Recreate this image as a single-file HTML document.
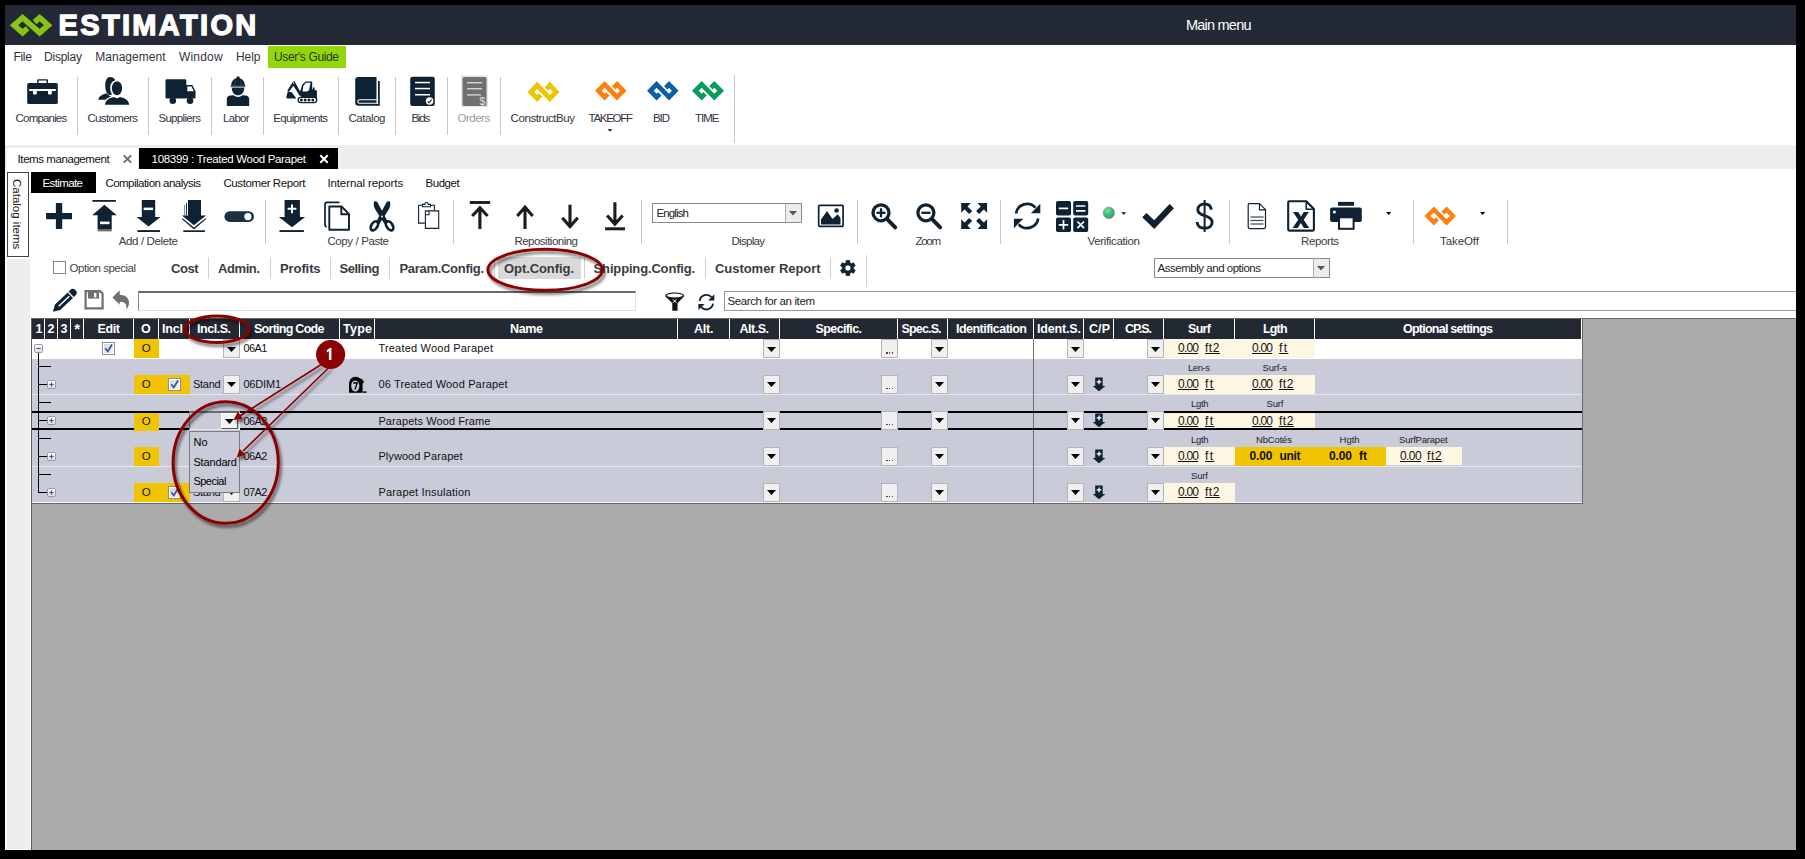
<!DOCTYPE html>
<html><head><meta charset="utf-8"><title>Estimation</title>
<style>
html,body{margin:0;padding:0;background:#000;}
body{width:1805px;height:859px;overflow:hidden;position:relative;font-family:"Liberation Sans",sans-serif;}
#app{position:absolute;left:0;top:0;width:1805px;height:859px;overflow:hidden;}
#app div,#app span.t,#app svg{position:absolute;}
span.t{white-space:pre;}
svg{overflow:visible;}
</style></head><body><div id="app">
<div style="left:5px;top:5px;width:1791px;height:845px;background:#fff;"></div>
<div style="left:5px;top:5px;width:1791px;height:40px;background:#232a36;"></div>
<div style="left:5px;top:145px;width:1791px;height:24px;background:#eeeeee;"></div>
<div style="left:7px;top:259px;width:23px;height:590px;background:#eeeeee;"></div>
<span class="t" style="left:1186.00px;top:18px;font-size:14.5px;line-height:14.5px;color:#fff;letter-spacing:-0.779px;">Main menu</span>
<span class="t" style="left:13.40px;top:51px;font-size:12px;line-height:12px;color:#33333d;letter-spacing:-0.277px;">File</span>
<span class="t" style="left:44.00px;top:51px;font-size:12px;line-height:12px;color:#33333d;letter-spacing:-0.225px;">Display</span>
<span class="t" style="left:95.20px;top:51px;font-size:12px;line-height:12px;color:#33333d;letter-spacing:0.040px;">Management</span>
<span class="t" style="left:179.00px;top:51px;font-size:12px;line-height:12px;color:#33333d;letter-spacing:0.178px;">Window</span>
<span class="t" style="left:236.00px;top:51px;font-size:12px;line-height:12px;color:#33333d;letter-spacing:-0.095px;">Help</span>
<div style="left:268px;top:46px;width:77.5px;height:22px;background:#93d60b;"></div>
<span class="t" style="left:274.00px;top:51px;font-size:12px;line-height:12px;color:#2a3a10;letter-spacing:-0.363px;">User's Guide</span>
<div style="left:77px;top:77px;width:1px;height:58px;background:#c8c8c8;"></div>
<div style="left:148px;top:77px;width:1px;height:58px;background:#c8c8c8;"></div>
<div style="left:211px;top:77px;width:1px;height:58px;background:#c8c8c8;"></div>
<div style="left:263px;top:77px;width:1px;height:58px;background:#c8c8c8;"></div>
<div style="left:338px;top:77px;width:1px;height:58px;background:#c8c8c8;"></div>
<div style="left:395px;top:77px;width:1px;height:58px;background:#c8c8c8;"></div>
<div style="left:447px;top:77px;width:1px;height:58px;background:#c8c8c8;"></div>
<div style="left:500px;top:77px;width:1px;height:58px;background:#c8c8c8;"></div>
<div style="left:734px;top:75px;width:1px;height:68px;background:#c8c8c8;"></div>
<span class="t" style="left:15.60px;top:113px;font-size:11.5px;line-height:11.5px;color:#33333d;letter-spacing:-0.821px;">Companies</span>
<span class="t" style="left:87.40px;top:113px;font-size:11.5px;line-height:11.5px;color:#33333d;letter-spacing:-0.625px;">Customers</span>
<span class="t" style="left:158.40px;top:113px;font-size:11.5px;line-height:11.5px;color:#33333d;letter-spacing:-0.668px;">Suppliers</span>
<span class="t" style="left:223.00px;top:113px;font-size:11.5px;line-height:11.5px;color:#33333d;letter-spacing:-0.704px;">Labor</span>
<span class="t" style="left:273.20px;top:113px;font-size:11.5px;line-height:11.5px;color:#33333d;letter-spacing:-0.659px;">Equipments</span>
<span class="t" style="left:348.50px;top:113px;font-size:11.5px;line-height:11.5px;color:#33333d;letter-spacing:-0.440px;">Catalog</span>
<span class="t" style="left:411.40px;top:113px;font-size:11.5px;line-height:11.5px;color:#33333d;letter-spacing:-1.189px;">Bids</span>
<span class="t" style="left:457.60px;top:113px;font-size:11.5px;line-height:11.5px;color:#9a9aa6;letter-spacing:-0.509px;">Orders</span>
<span class="t" style="left:510.60px;top:113px;font-size:11.5px;line-height:11.5px;color:#33333d;letter-spacing:-0.420px;">ConstructBuy</span>
<span class="t" style="left:588.60px;top:113px;font-size:11.5px;line-height:11.5px;color:#33333d;letter-spacing:-1.296px;">TAKEOFF</span>
<span class="t" style="left:653.00px;top:113px;font-size:11.5px;line-height:11.5px;color:#33333d;letter-spacing:-1.085px;">BID</span>
<span class="t" style="left:695.00px;top:113px;font-size:11.5px;line-height:11.5px;color:#33333d;letter-spacing:-1.025px;">TIME</span>
<div style="left:7px;top:148px;width:131px;height:21px;background:#fff;"></div>
<span class="t" style="left:17.60px;top:154px;font-size:11.5px;line-height:11.5px;color:#111;letter-spacing:-0.429px;">Items management</span>
<div style="left:139px;top:148px;width:199px;height:21px;background:#000;"></div>
<span class="t" style="left:151.60px;top:154px;font-size:11.5px;line-height:11.5px;color:#fff;letter-spacing:-0.324px;">108399 : Treated Wood Parapet</span>
<div style="left:7px;top:172px;width:22px;height:85px;background:#fff;box-sizing:border-box;border:1px solid #444;"></div>
<div style="left:31px;top:172px;width:65px;height:21px;background:#000;"></div>
<span class="t" style="left:42.40px;top:178px;font-size:11.5px;line-height:11.5px;color:#fff;letter-spacing:-0.591px;">Estimate</span>
<span class="t" style="left:105.40px;top:178px;font-size:11.5px;line-height:11.5px;color:#111;letter-spacing:-0.519px;">Compilation analysis</span>
<span class="t" style="left:223.40px;top:178px;font-size:11.5px;line-height:11.5px;color:#111;letter-spacing:-0.397px;">Customer Report</span>
<span class="t" style="left:327.40px;top:178px;font-size:11.5px;line-height:11.5px;color:#111;letter-spacing:-0.103px;">Internal reports</span>
<span class="t" style="left:425.60px;top:178px;font-size:11.5px;line-height:11.5px;color:#111;letter-spacing:-0.489px;">Budget</span>
<div style="left:265px;top:200px;width:1px;height:44px;background:#c8c8c8;"></div>
<div style="left:453px;top:200px;width:1px;height:44px;background:#c8c8c8;"></div>
<div style="left:641px;top:200px;width:1px;height:44px;background:#c8c8c8;"></div>
<div style="left:857px;top:200px;width:1px;height:44px;background:#c8c8c8;"></div>
<div style="left:1000px;top:200px;width:1px;height:44px;background:#c8c8c8;"></div>
<div style="left:1229px;top:200px;width:1px;height:44px;background:#c8c8c8;"></div>
<div style="left:1413px;top:200px;width:1px;height:44px;background:#c8c8c8;"></div>
<div style="left:1507px;top:200px;width:1px;height:44px;background:#c8c8c8;"></div>
<span class="t" style="left:118.80px;top:236px;font-size:11.5px;line-height:11.5px;color:#3a3a44;letter-spacing:-0.371px;">Add / Delete</span>
<span class="t" style="left:327.40px;top:236px;font-size:11.5px;line-height:11.5px;color:#3a3a44;letter-spacing:-0.385px;">Copy / Paste</span>
<span class="t" style="left:514.40px;top:236px;font-size:11.5px;line-height:11.5px;color:#3a3a44;letter-spacing:-0.507px;">Repositioning</span>
<span class="t" style="left:731.40px;top:236px;font-size:11.5px;line-height:11.5px;color:#3a3a44;letter-spacing:-0.685px;">Display</span>
<span class="t" style="left:915.60px;top:236px;font-size:11.5px;line-height:11.5px;color:#3a3a44;letter-spacing:-1.331px;">Zoom</span>
<span class="t" style="left:1087.60px;top:236px;font-size:11.5px;line-height:11.5px;color:#3a3a44;letter-spacing:-0.351px;">Verification</span>
<span class="t" style="left:1301.00px;top:236px;font-size:11.5px;line-height:11.5px;color:#3a3a44;letter-spacing:-0.377px;">Reports</span>
<span class="t" style="left:1440.00px;top:236px;font-size:11.5px;line-height:11.5px;color:#3a3a44;letter-spacing:-0.074px;">TakeOff</span>
<div style="left:652px;top:203px;width:150px;height:20px;background:#fff;box-sizing:border-box;border:1px solid #8a8a8a;"></div>
<div style="left:785px;top:204px;width:16px;height:18px;background:#ececec;box-sizing:border-box;border-left:1px solid #adadad;"></div>
<span class="t" style="left:656.40px;top:208px;font-size:11.5px;line-height:11.5px;color:#222;letter-spacing:-0.853px;">English</span>
<svg style="left:789px;top:211px;" width="8" height="5" viewBox="0 0 8 5"><path d="M0 0h8L4 4.5z" fill="#555"/></svg>
<div style="left:53px;top:261px;width:13px;height:13px;background:#fff;box-sizing:border-box;border:1px solid #8a8a8a;"></div>
<span class="t" style="left:69.60px;top:263px;font-size:11.5px;line-height:11.5px;color:#444;letter-spacing:-0.498px;">Option special</span>
<div style="left:498px;top:257px;width:83px;height:22px;background:#d9d9d9;"></div>
<span class="t" style="left:171.00px;top:262px;font-size:13px;line-height:13px;color:#3b3b40;font-weight:bold;letter-spacing:-0.429px;">Cost</span>
<span class="t" style="left:218.00px;top:262px;font-size:13px;line-height:13px;color:#3b3b40;font-weight:bold;letter-spacing:-0.411px;">Admin.</span>
<span class="t" style="left:280.00px;top:262px;font-size:13px;line-height:13px;color:#3b3b40;font-weight:bold;letter-spacing:-0.095px;">Profits</span>
<span class="t" style="left:339.40px;top:262px;font-size:13px;line-height:13px;color:#3b3b40;font-weight:bold;letter-spacing:-0.436px;">Selling</span>
<span class="t" style="left:399.40px;top:262px;font-size:13px;line-height:13px;color:#3b3b40;font-weight:bold;letter-spacing:-0.294px;">Param.Config.</span>
<span class="t" style="left:504.00px;top:262px;font-size:13px;line-height:13px;color:#3b3b40;font-weight:bold;letter-spacing:-0.076px;">Opt.Config.</span>
<span class="t" style="left:593.60px;top:262px;font-size:13px;line-height:13px;color:#3b3b40;font-weight:bold;letter-spacing:-0.158px;">Shipping.Config.</span>
<span class="t" style="left:715.00px;top:262px;font-size:13px;line-height:13px;color:#3b3b40;font-weight:bold;letter-spacing:-0.042px;">Customer Report</span>
<div style="left:208px;top:257px;width:1px;height:22px;background:#d0d0d0;"></div>
<div style="left:270px;top:257px;width:1px;height:22px;background:#d0d0d0;"></div>
<div style="left:330px;top:257px;width:1px;height:22px;background:#d0d0d0;"></div>
<div style="left:389px;top:257px;width:1px;height:22px;background:#d0d0d0;"></div>
<div style="left:494px;top:257px;width:1px;height:22px;background:#d0d0d0;"></div>
<div style="left:584px;top:257px;width:1px;height:22px;background:#d0d0d0;"></div>
<div style="left:705px;top:257px;width:1px;height:22px;background:#d0d0d0;"></div>
<div style="left:830px;top:257px;width:1px;height:22px;background:#d0d0d0;"></div>
<div style="left:866px;top:255px;width:1px;height:32px;background:#d0d0d0;"></div>
<div style="left:1154px;top:258px;width:176px;height:20px;background:#fff;box-sizing:border-box;border:1px solid #8a8a8a;"></div>
<div style="left:1313px;top:259px;width:16px;height:18px;background:#ececec;box-sizing:border-box;border-left:1px solid #adadad;"></div>
<span class="t" style="left:1157.60px;top:263px;font-size:11.5px;line-height:11.5px;color:#222;letter-spacing:-0.479px;">Assembly and options</span>
<svg style="left:1317px;top:266px;" width="8" height="5" viewBox="0 0 8 5"><path d="M0 0h8L4 4.5z" fill="#555"/></svg>
<div style="left:138px;top:291px;width:498px;height:20px;background:#fff;box-sizing:border-box;border:1px solid #e0e0e0;border-top:2px solid #6a6a6a;border-left:1px solid #8a8a8a;"></div>
<div style="left:724px;top:291px;width:1072px;height:20px;background:#fff;box-sizing:border-box;border:1px solid #9a9a9a;border-right:none;"></div>
<span class="t" style="left:727.40px;top:296px;font-size:11.5px;line-height:11.5px;color:#222;letter-spacing:-0.374px;">Search for an item</span>
<div style="left:31px;top:318px;width:1765px;height:532px;background:#ababab;"></div>
<div style="left:31px;top:318px;width:1px;height:532px;background:#5e5e5e;"></div>
<div style="left:31px;top:318px;width:1765px;height:1px;background:#6a6a6a;"></div>
<div style="left:32px;top:319px;width:1549px;height:20px;background:#232933;"></div>
<div style="left:44px;top:319px;width:1px;height:20px;background:#fff;"></div>
<div style="left:57px;top:319px;width:1px;height:20px;background:#fff;"></div>
<div style="left:70px;top:319px;width:1px;height:20px;background:#fff;"></div>
<div style="left:83px;top:319px;width:1px;height:20px;background:#fff;"></div>
<div style="left:133px;top:319px;width:1px;height:20px;background:#fff;"></div>
<div style="left:158px;top:319px;width:1px;height:20px;background:#fff;"></div>
<div style="left:189px;top:319px;width:1px;height:20px;background:#fff;"></div>
<div style="left:239px;top:319px;width:1px;height:20px;background:#fff;"></div>
<div style="left:339px;top:319px;width:1px;height:20px;background:#fff;"></div>
<div style="left:374px;top:319px;width:1px;height:20px;background:#fff;"></div>
<div style="left:677px;top:319px;width:1px;height:20px;background:#fff;"></div>
<div style="left:729px;top:319px;width:1px;height:20px;background:#fff;"></div>
<div style="left:779px;top:319px;width:1px;height:20px;background:#fff;"></div>
<div style="left:897px;top:319px;width:1px;height:20px;background:#fff;"></div>
<div style="left:947px;top:319px;width:1px;height:20px;background:#fff;"></div>
<div style="left:1033px;top:319px;width:1px;height:20px;background:#fff;"></div>
<div style="left:1083px;top:319px;width:1px;height:20px;background:#fff;"></div>
<div style="left:1113px;top:319px;width:1px;height:20px;background:#fff;"></div>
<div style="left:1163px;top:319px;width:1px;height:20px;background:#fff;"></div>
<div style="left:1234px;top:319px;width:1px;height:20px;background:#fff;"></div>
<div style="left:1314px;top:319px;width:1px;height:20px;background:#fff;"></div>
<span class="t" style="left:35.60px;top:323px;font-size:12.5px;line-height:12.5px;color:#fff;font-weight:bold;">1</span>
<span class="t" style="left:47.50px;top:323px;font-size:12.5px;line-height:12.5px;color:#fff;font-weight:bold;">2</span>
<span class="t" style="left:60.50px;top:323px;font-size:12.5px;line-height:12.5px;color:#fff;font-weight:bold;">3</span>
<span class="t" style="left:97.40px;top:323px;font-size:12.5px;line-height:12.5px;color:#fff;font-weight:bold;letter-spacing:-0.337px;">Edit</span>
<span class="t" style="left:141.00px;top:323px;font-size:12.5px;line-height:12.5px;color:#fff;font-weight:bold;">O</span>
<span class="t" style="left:162.00px;top:323px;font-size:12.5px;line-height:12.5px;color:#fff;font-weight:bold;letter-spacing:-0.179px;">Incl</span>
<span class="t" style="left:197.00px;top:323px;font-size:12.5px;line-height:12.5px;color:#fff;font-weight:bold;letter-spacing:-0.469px;">Incl.S.</span>
<span class="t" style="left:254.00px;top:323px;font-size:12.5px;line-height:12.5px;color:#fff;font-weight:bold;letter-spacing:-0.733px;">Sorting Code</span>
<span class="t" style="left:343.00px;top:323px;font-size:12.5px;line-height:12.5px;color:#fff;font-weight:bold;letter-spacing:0.250px;">Type</span>
<span class="t" style="left:510.00px;top:323px;font-size:12.5px;line-height:12.5px;color:#fff;font-weight:bold;letter-spacing:-0.350px;">Name</span>
<span class="t" style="left:694.00px;top:323px;font-size:12.5px;line-height:12.5px;color:#fff;font-weight:bold;letter-spacing:-0.246px;">Alt.</span>
<span class="t" style="left:739.60px;top:323px;font-size:12.5px;line-height:12.5px;color:#fff;font-weight:bold;letter-spacing:-0.510px;">Alt.S.</span>
<span class="t" style="left:815.60px;top:323px;font-size:12.5px;line-height:12.5px;color:#fff;font-weight:bold;letter-spacing:-0.627px;">Specific.</span>
<span class="t" style="left:901.60px;top:323px;font-size:12.5px;line-height:12.5px;color:#fff;font-weight:bold;letter-spacing:-0.860px;">Spec.S.</span>
<span class="t" style="left:956.00px;top:323px;font-size:12.5px;line-height:12.5px;color:#fff;font-weight:bold;letter-spacing:-0.521px;">Identification</span>
<span class="t" style="left:1037.00px;top:323px;font-size:12.5px;line-height:12.5px;color:#fff;font-weight:bold;letter-spacing:-0.163px;">Ident.S.</span>
<span class="t" style="left:1089.00px;top:323px;font-size:12.5px;line-height:12.5px;color:#fff;font-weight:bold;letter-spacing:0.081px;">C/P</span>
<span class="t" style="left:1125.00px;top:323px;font-size:12.5px;line-height:12.5px;color:#fff;font-weight:bold;letter-spacing:-1.009px;">CP.S.</span>
<span class="t" style="left:1188.00px;top:323px;font-size:12.5px;line-height:12.5px;color:#fff;font-weight:bold;letter-spacing:-0.675px;">Surf</span>
<span class="t" style="left:1263.00px;top:323px;font-size:12.5px;line-height:12.5px;color:#fff;font-weight:bold;letter-spacing:-0.825px;">Lgth</span>
<span class="t" style="left:1403.00px;top:323px;font-size:12.5px;line-height:12.5px;color:#fff;font-weight:bold;letter-spacing:-0.755px;">Optional settings</span>
<span class="t" style="left:74.20px;top:321px;font-size:15px;line-height:15px;color:#fff;font-weight:bold;">*</span>
<div style="left:32px;top:339px;width:1550px;height:20px;background:#fff;"></div>
<div style="left:32px;top:359px;width:1550px;height:143px;background:#c9cbd9;"></div>
<div style="left:32px;top:394px;width:1550px;height:1px;background:#e6e7ef;"></div>
<div style="left:32px;top:466px;width:1550px;height:1px;background:#e6e7ef;"></div>
<div style="left:32px;top:502px;width:1550px;height:1px;background:#f4f4f4;"></div>
<div style="left:1581px;top:319px;width:1px;height:20px;background:#fff;"></div>
<div style="left:1582px;top:318px;width:1px;height:186px;background:#686868;"></div>
<div style="left:32px;top:503px;width:1551px;height:1px;background:#686868;"></div>
<div style="left:1033px;top:339px;width:1px;height:164px;background:#6e6e6e;"></div>
<div style="left:32px;top:411px;width:1550px;height:2px;background:#000;"></div>
<div style="left:32px;top:428px;width:1550px;height:2px;background:#000;"></div>
<div style="left:134px;top:339px;width:25px;height:19px;background:#f0c400;"></div>
<div style="left:134px;top:375px;width:56px;height:19px;background:#f0c400;"></div>
<div style="left:134px;top:413px;width:25px;height:17.5px;background:#f0c400;"></div>
<div style="left:134px;top:447px;width:25px;height:19px;background:#f0c400;"></div>
<div style="left:134px;top:483px;width:56px;height:19px;background:#f0c400;"></div>
<span class="t" style="left:141.83px;top:343px;font-size:11.5px;line-height:11.5px;color:#111;">O</span>
<span class="t" style="left:141.83px;top:379px;font-size:11.5px;line-height:11.5px;color:#111;">O</span>
<span class="t" style="left:141.83px;top:416px;font-size:11.5px;line-height:11.5px;color:#111;">O</span>
<span class="t" style="left:141.83px;top:451px;font-size:11.5px;line-height:11.5px;color:#111;">O</span>
<span class="t" style="left:141.83px;top:487px;font-size:11.5px;line-height:11.5px;color:#111;">O</span>
<div style="left:223px;top:339.4px;width:17px;height:18.6px;background:#f0f0f0;box-sizing:border-box;border:1px solid #b4b4b4;"></div>
<svg style="left:227px;top:346.7px;" width="9" height="5" viewBox="0 0 9 5"><path d="M0 0h9L4.5 5z" fill="#000"/></svg>
<div style="left:763px;top:339.4px;width:17px;height:18.6px;background:#f0f0f0;box-sizing:border-box;border:1px solid #b4b4b4;"></div>
<svg style="left:767px;top:346.7px;" width="9" height="5" viewBox="0 0 9 5"><path d="M0 0h9L4.5 5z" fill="#000"/></svg>
<div style="left:881px;top:339.4px;width:17px;height:18.6px;background:#f0f0f0;box-sizing:border-box;border:1px solid #b4b4b4;"></div>
<div style="left:886.4px;top:352.4px;width:1.2px;height:1.2px;background:#60308a;"></div>
<div style="left:889px;top:352.4px;width:1.2px;height:1.2px;background:#60308a;"></div>
<div style="left:891.6px;top:352.4px;width:1.2px;height:1.2px;background:#60308a;"></div>
<div style="left:931px;top:339.4px;width:17px;height:18.6px;background:#f0f0f0;box-sizing:border-box;border:1px solid #b4b4b4;"></div>
<svg style="left:935px;top:346.7px;" width="9" height="5" viewBox="0 0 9 5"><path d="M0 0h9L4.5 5z" fill="#000"/></svg>
<div style="left:1067px;top:339.4px;width:17px;height:18.6px;background:#f0f0f0;box-sizing:border-box;border:1px solid #b4b4b4;"></div>
<svg style="left:1071px;top:346.7px;" width="9" height="5" viewBox="0 0 9 5"><path d="M0 0h9L4.5 5z" fill="#000"/></svg>
<div style="left:1147px;top:339.4px;width:17px;height:18.6px;background:#f0f0f0;box-sizing:border-box;border:1px solid #b4b4b4;"></div>
<svg style="left:1151px;top:346.7px;" width="9" height="5" viewBox="0 0 9 5"><path d="M0 0h9L4.5 5z" fill="#000"/></svg>
<div style="left:223px;top:375px;width:17px;height:18.6px;background:#f0f0f0;box-sizing:border-box;border:1px solid #b4b4b4;"></div>
<svg style="left:227px;top:382.3px;" width="9" height="5" viewBox="0 0 9 5"><path d="M0 0h9L4.5 5z" fill="#000"/></svg>
<div style="left:763px;top:375px;width:17px;height:18.6px;background:#f0f0f0;box-sizing:border-box;border:1px solid #b4b4b4;"></div>
<svg style="left:767px;top:382.3px;" width="9" height="5" viewBox="0 0 9 5"><path d="M0 0h9L4.5 5z" fill="#000"/></svg>
<div style="left:881px;top:375px;width:17px;height:18.6px;background:#f0f0f0;box-sizing:border-box;border:1px solid #b4b4b4;"></div>
<div style="left:886.4px;top:388px;width:1.2px;height:1.2px;background:#60308a;"></div>
<div style="left:889px;top:388px;width:1.2px;height:1.2px;background:#60308a;"></div>
<div style="left:891.6px;top:388px;width:1.2px;height:1.2px;background:#60308a;"></div>
<div style="left:931px;top:375px;width:17px;height:18.6px;background:#f0f0f0;box-sizing:border-box;border:1px solid #b4b4b4;"></div>
<svg style="left:935px;top:382.3px;" width="9" height="5" viewBox="0 0 9 5"><path d="M0 0h9L4.5 5z" fill="#000"/></svg>
<div style="left:1067px;top:375px;width:17px;height:18.6px;background:#f0f0f0;box-sizing:border-box;border:1px solid #b4b4b4;"></div>
<svg style="left:1071px;top:382.3px;" width="9" height="5" viewBox="0 0 9 5"><path d="M0 0h9L4.5 5z" fill="#000"/></svg>
<div style="left:1147px;top:375px;width:17px;height:18.6px;background:#f0f0f0;box-sizing:border-box;border:1px solid #b4b4b4;"></div>
<svg style="left:1151px;top:382.3px;" width="9" height="5" viewBox="0 0 9 5"><path d="M0 0h9L4.5 5z" fill="#000"/></svg>
<div style="left:763px;top:411px;width:17px;height:18.6px;background:#f0f0f0;box-sizing:border-box;border:1px solid #b4b4b4;"></div>
<svg style="left:767px;top:418.3px;" width="9" height="5" viewBox="0 0 9 5"><path d="M0 0h9L4.5 5z" fill="#000"/></svg>
<div style="left:881px;top:411px;width:17px;height:18.6px;background:#f0f0f0;box-sizing:border-box;border:1px solid #b4b4b4;"></div>
<div style="left:886.4px;top:424px;width:1.2px;height:1.2px;background:#60308a;"></div>
<div style="left:889px;top:424px;width:1.2px;height:1.2px;background:#60308a;"></div>
<div style="left:891.6px;top:424px;width:1.2px;height:1.2px;background:#60308a;"></div>
<div style="left:931px;top:411px;width:17px;height:18.6px;background:#f0f0f0;box-sizing:border-box;border:1px solid #b4b4b4;"></div>
<svg style="left:935px;top:418.3px;" width="9" height="5" viewBox="0 0 9 5"><path d="M0 0h9L4.5 5z" fill="#000"/></svg>
<div style="left:1067px;top:411px;width:17px;height:18.6px;background:#f0f0f0;box-sizing:border-box;border:1px solid #b4b4b4;"></div>
<svg style="left:1071px;top:418.3px;" width="9" height="5" viewBox="0 0 9 5"><path d="M0 0h9L4.5 5z" fill="#000"/></svg>
<div style="left:1147px;top:411px;width:17px;height:18.6px;background:#f0f0f0;box-sizing:border-box;border:1px solid #b4b4b4;"></div>
<svg style="left:1151px;top:418.3px;" width="9" height="5" viewBox="0 0 9 5"><path d="M0 0h9L4.5 5z" fill="#000"/></svg>
<div style="left:223px;top:447px;width:17px;height:18.6px;background:#f0f0f0;box-sizing:border-box;border:1px solid #b4b4b4;"></div>
<svg style="left:227px;top:454.3px;" width="9" height="5" viewBox="0 0 9 5"><path d="M0 0h9L4.5 5z" fill="#000"/></svg>
<div style="left:763px;top:447px;width:17px;height:18.6px;background:#f0f0f0;box-sizing:border-box;border:1px solid #b4b4b4;"></div>
<svg style="left:767px;top:454.3px;" width="9" height="5" viewBox="0 0 9 5"><path d="M0 0h9L4.5 5z" fill="#000"/></svg>
<div style="left:881px;top:447px;width:17px;height:18.6px;background:#f0f0f0;box-sizing:border-box;border:1px solid #b4b4b4;"></div>
<div style="left:886.4px;top:460px;width:1.2px;height:1.2px;background:#60308a;"></div>
<div style="left:889px;top:460px;width:1.2px;height:1.2px;background:#60308a;"></div>
<div style="left:891.6px;top:460px;width:1.2px;height:1.2px;background:#60308a;"></div>
<div style="left:931px;top:447px;width:17px;height:18.6px;background:#f0f0f0;box-sizing:border-box;border:1px solid #b4b4b4;"></div>
<svg style="left:935px;top:454.3px;" width="9" height="5" viewBox="0 0 9 5"><path d="M0 0h9L4.5 5z" fill="#000"/></svg>
<div style="left:1067px;top:447px;width:17px;height:18.6px;background:#f0f0f0;box-sizing:border-box;border:1px solid #b4b4b4;"></div>
<svg style="left:1071px;top:454.3px;" width="9" height="5" viewBox="0 0 9 5"><path d="M0 0h9L4.5 5z" fill="#000"/></svg>
<div style="left:1147px;top:447px;width:17px;height:18.6px;background:#f0f0f0;box-sizing:border-box;border:1px solid #b4b4b4;"></div>
<svg style="left:1151px;top:454.3px;" width="9" height="5" viewBox="0 0 9 5"><path d="M0 0h9L4.5 5z" fill="#000"/></svg>
<div style="left:223px;top:483px;width:17px;height:18.6px;background:#f0f0f0;box-sizing:border-box;border:1px solid #b4b4b4;"></div>
<svg style="left:227px;top:490.3px;" width="9" height="5" viewBox="0 0 9 5"><path d="M0 0h9L4.5 5z" fill="#000"/></svg>
<div style="left:763px;top:483px;width:17px;height:18.6px;background:#f0f0f0;box-sizing:border-box;border:1px solid #b4b4b4;"></div>
<svg style="left:767px;top:490.3px;" width="9" height="5" viewBox="0 0 9 5"><path d="M0 0h9L4.5 5z" fill="#000"/></svg>
<div style="left:881px;top:483px;width:17px;height:18.6px;background:#f0f0f0;box-sizing:border-box;border:1px solid #b4b4b4;"></div>
<div style="left:886.4px;top:496px;width:1.2px;height:1.2px;background:#60308a;"></div>
<div style="left:889px;top:496px;width:1.2px;height:1.2px;background:#60308a;"></div>
<div style="left:891.6px;top:496px;width:1.2px;height:1.2px;background:#60308a;"></div>
<div style="left:931px;top:483px;width:17px;height:18.6px;background:#f0f0f0;box-sizing:border-box;border:1px solid #b4b4b4;"></div>
<svg style="left:935px;top:490.3px;" width="9" height="5" viewBox="0 0 9 5"><path d="M0 0h9L4.5 5z" fill="#000"/></svg>
<div style="left:1067px;top:483px;width:17px;height:18.6px;background:#f0f0f0;box-sizing:border-box;border:1px solid #b4b4b4;"></div>
<svg style="left:1071px;top:490.3px;" width="9" height="5" viewBox="0 0 9 5"><path d="M0 0h9L4.5 5z" fill="#000"/></svg>
<div style="left:1147px;top:483px;width:17px;height:18.6px;background:#f0f0f0;box-sizing:border-box;border:1px solid #b4b4b4;"></div>
<svg style="left:1151px;top:490.3px;" width="9" height="5" viewBox="0 0 9 5"><path d="M0 0h9L4.5 5z" fill="#000"/></svg>
<span class="t" style="left:243.40px;top:343px;font-size:11px;line-height:11px;color:#111;letter-spacing:-0.562px;">06A1</span>
<span class="t" style="left:243.40px;top:379px;font-size:11px;line-height:11px;color:#111;letter-spacing:-0.182px;">06DIM1</span>
<span class="t" style="left:243.40px;top:416px;font-size:11px;line-height:11px;color:#111;letter-spacing:-0.562px;">06A2</span>
<span class="t" style="left:243.40px;top:451px;font-size:11px;line-height:11px;color:#111;letter-spacing:-0.562px;">06A2</span>
<span class="t" style="left:243.40px;top:487px;font-size:11px;line-height:11px;color:#111;letter-spacing:-0.562px;">07A2</span>
<span class="t" style="left:378.40px;top:343px;font-size:11px;line-height:11px;color:#111;letter-spacing:0.206px;">Treated Wood Parapet</span>
<span class="t" style="left:378.40px;top:379px;font-size:11px;line-height:11px;color:#111;letter-spacing:0.156px;">06 Treated Wood Parapet</span>
<span class="t" style="left:378.40px;top:416px;font-size:11px;line-height:11px;color:#111;letter-spacing:0.085px;">Parapets Wood Frame</span>
<span class="t" style="left:378.40px;top:451px;font-size:11px;line-height:11px;color:#111;letter-spacing:0.074px;">Plywood Parapet</span>
<span class="t" style="left:378.40px;top:487px;font-size:11px;line-height:11px;color:#111;letter-spacing:0.196px;">Parapet Insulation</span>
<span class="t" style="left:193.00px;top:379px;font-size:11px;line-height:11px;color:#111;letter-spacing:-0.286px;">Stand</span>
<span class="t" style="left:193.00px;top:487px;font-size:11px;line-height:11px;color:#111;letter-spacing:-0.286px;">Stand</span>
<div style="left:1164px;top:339.4px;width:151px;height:18.4px;background:#fdf6e3;"></div>
<div style="left:1164px;top:375px;width:151px;height:18.6px;background:#fdf6e3;"></div>
<div style="left:1164px;top:413px;width:151px;height:15px;background:#fdf6e3;"></div>
<div style="left:1164px;top:447px;width:71px;height:18.4px;background:#fdf6e3;"></div>
<div style="left:1235px;top:447px;width:151px;height:18.6px;background:#f0c400;"></div>
<div style="left:1386px;top:447px;width:76px;height:18.4px;background:#fdf6e3;"></div>
<div style="left:1164px;top:483px;width:71px;height:18.6px;background:#fdf6e3;"></div>
<span class="t" style="left:1178.00px;top:342px;font-size:12px;line-height:12px;color:#111;letter-spacing:-0.784px;text-decoration:underline;text-underline-offset:1px;">0.00</span>
<span class="t" style="left:1205.00px;top:342px;font-size:12px;line-height:12px;color:#111;letter-spacing:0.528px;text-decoration:underline;text-underline-offset:1px;">ft2</span>
<span class="t" style="left:1252.00px;top:342px;font-size:12px;line-height:12px;color:#111;letter-spacing:-0.784px;text-decoration:underline;text-underline-offset:1px;">0.00</span>
<span class="t" style="left:1279.00px;top:342px;font-size:12px;line-height:12px;color:#111;letter-spacing:1.328px;text-decoration:underline;text-underline-offset:1px;">ft</span>
<span class="t" style="left:1178.00px;top:378px;font-size:12px;line-height:12px;color:#111;letter-spacing:-0.784px;text-decoration:underline;text-underline-offset:1px;">0.00</span>
<span class="t" style="left:1205.00px;top:378px;font-size:12px;line-height:12px;color:#111;letter-spacing:1.328px;text-decoration:underline;text-underline-offset:1px;">ft</span>
<span class="t" style="left:1252.00px;top:378px;font-size:12px;line-height:12px;color:#111;letter-spacing:-0.784px;text-decoration:underline;text-underline-offset:1px;">0.00</span>
<span class="t" style="left:1279.00px;top:378px;font-size:12px;line-height:12px;color:#111;letter-spacing:0.528px;text-decoration:underline;text-underline-offset:1px;">ft2</span>
<span class="t" style="left:1178.00px;top:415px;font-size:12px;line-height:12px;color:#111;letter-spacing:-0.784px;text-decoration:underline;text-underline-offset:1px;">0.00</span>
<span class="t" style="left:1205.00px;top:415px;font-size:12px;line-height:12px;color:#111;letter-spacing:1.328px;text-decoration:underline;text-underline-offset:1px;">ft</span>
<span class="t" style="left:1252.00px;top:415px;font-size:12px;line-height:12px;color:#111;letter-spacing:-0.784px;text-decoration:underline;text-underline-offset:1px;">0.00</span>
<span class="t" style="left:1279.00px;top:415px;font-size:12px;line-height:12px;color:#111;letter-spacing:0.528px;text-decoration:underline;text-underline-offset:1px;">ft2</span>
<span class="t" style="left:1178.00px;top:450px;font-size:12px;line-height:12px;color:#111;letter-spacing:-0.784px;text-decoration:underline;text-underline-offset:1px;">0.00</span>
<span class="t" style="left:1205.00px;top:450px;font-size:12px;line-height:12px;color:#111;letter-spacing:1.328px;text-decoration:underline;text-underline-offset:1px;">ft</span>
<span class="t" style="left:1400.00px;top:450px;font-size:12px;line-height:12px;color:#111;letter-spacing:-0.584px;text-decoration:underline;text-underline-offset:1px;">0.00</span>
<span class="t" style="left:1427.00px;top:450px;font-size:12px;line-height:12px;color:#111;letter-spacing:0.628px;text-decoration:underline;text-underline-offset:1px;">ft2</span>
<span class="t" style="left:1178.00px;top:486px;font-size:12px;line-height:12px;color:#111;letter-spacing:-0.784px;text-decoration:underline;text-underline-offset:1px;">0.00</span>
<span class="t" style="left:1205.00px;top:486px;font-size:12px;line-height:12px;color:#111;letter-spacing:0.528px;text-decoration:underline;text-underline-offset:1px;">ft2</span>
<span class="t" style="left:1249.40px;top:450px;font-size:12px;line-height:12px;color:#111;font-weight:bold;letter-spacing:-0.117px;">0.00</span>
<span class="t" style="left:1279.40px;top:450px;font-size:12px;line-height:12px;color:#111;font-weight:bold;letter-spacing:-0.332px;">unit</span>
<span class="t" style="left:1329.00px;top:450px;font-size:12px;line-height:12px;color:#111;font-weight:bold;letter-spacing:-0.117px;">0.00</span>
<span class="t" style="left:1359.00px;top:450px;font-size:12px;line-height:12px;color:#111;font-weight:bold;letter-spacing:0.008px;">ft</span>
<span class="t" style="left:1188.00px;top:363px;font-size:9.5px;line-height:9.5px;color:#222;letter-spacing:-0.440px;">Len-s</span>
<span class="t" style="left:1262.60px;top:363px;font-size:9.5px;line-height:9.5px;color:#222;letter-spacing:-0.187px;">Surf-s</span>
<span class="t" style="left:1191.00px;top:399px;font-size:9.5px;line-height:9.5px;color:#222;letter-spacing:-0.296px;">Lgth</span>
<span class="t" style="left:1266.50px;top:399px;font-size:9.5px;line-height:9.5px;color:#222;letter-spacing:-0.147px;">Surf</span>
<span class="t" style="left:1191.00px;top:435px;font-size:9.5px;line-height:9.5px;color:#222;letter-spacing:-0.296px;">Lgth</span>
<span class="t" style="left:1256.00px;top:435px;font-size:9.5px;line-height:9.5px;color:#222;letter-spacing:-0.161px;">NbCotés</span>
<span class="t" style="left:1339.60px;top:435px;font-size:9.5px;line-height:9.5px;color:#222;letter-spacing:-0.021px;">Hgth</span>
<span class="t" style="left:1399.00px;top:435px;font-size:9.5px;line-height:9.5px;color:#222;letter-spacing:-0.209px;">SurfParapet</span>
<span class="t" style="left:1191.00px;top:471px;font-size:9.5px;line-height:9.5px;color:#222;letter-spacing:-0.147px;">Surf</span>
<svg style="left:0;top:0" width="1805" height="859" viewBox="0 0 1805 859"><path d="M27.64 28.23 L22.57 32.68 L14.05 25.20 L22.57 17.72 L39.63 32.68 L48.15 25.20 L39.63 17.72 L34.56 22.17" fill="none" stroke="#86c418" stroke-width="5.60" stroke-linejoin="miter" stroke-miterlimit="10"/>
<g fill="#0e2233"><rect x="27.2" y="83" width="30.6" height="21" rx="1.6"/><path d="M37.2 83.5v-3.2q0-1.1 1.1-1.1h8.6q1.1 0 1.1 1.1v3.2h-1.4v-2.4q0-.5-.5-.5h-7q-.5 0-.5.5v2.4z"/></g><path d="M29.2 89h26.6v2h-4v2.6q0 .9-.9.9h-2q-.9 0-.9-.9V91H36.8v2.6q0 .9-.9.9h-2q-.9 0-.9-.9V91h-3.8z" fill="#fff"/>
<g fill="#0e2233"><path d="M110 77c3 0 4.6 1.6 5.2 3.4c-3.2.6-5 3.6-5 7.6c0 2.4.7 4.6 1.9 6.3c-.6.5-1.2.7-2.1.7c-1 0-1.7-.5-2.4-1.300c-1.500-1.700-2.400-4.200-2.400-7.700c0-5.600 1.800-9 4.800-9z" transform="translate(0,0)"/><path d="M98.200 99.800c.6-3.400 3.600-5.600 8.800-6.400c.5.800 1.100 1.500 1.900 2c.7.500 1.500.8 2.300.900c-1.700 1-4.500 2.100-5.600 3.500z"/><ellipse cx="117" cy="88.300" rx="5.100" ry="7"/><path d="M105 104.800c.5-4.600 4.200-6.800 9-7.700c.8.700 1.800 1.100 3 1.100s2.200-.4 3-1.100c4.800.9 8.600 3.100 9.200 7.700z"/></g>
<g fill="#0e2233"><rect x="165.500" y="79.200" width="20.800" height="19.200" rx="1.200"/><path d="M186 85h6.300l3.200 6.200v6.200q0 1-1 1H186z"/><circle cx="172.800" cy="100.800" r="3.300"/><circle cx="190" cy="100.800" r="3.300"/></g><path d="M187.300 86.600h4.200l2.300 4.600h-6.500z" fill="#fff"/>
<g fill="#0e2233"><rect x="236.500" y="76.400" width="3" height="3.500" rx=".8"/><path d="M231.200 85.600c0-2.600.9-4.700 2.600-6.100c1.200-1 2.600-1.500 4.200-1.500s3 .5 4.200 1.500c1.700 1.400 2.600 3.500 2.600 6.100z"/><rect x="230.700" y="85.200" width="14.600" height="1.500" rx=".5"/><path d="M231.800 87.900h12.400c0 4.200-2.700 7.400-6.200 7.400s-6.200-3.200-6.200-7.400z"/><path d="M226.800 106v-6.500q0-3.600 3.600-3.900l3.300-.3c1.200 1.100 2.600 1.700 4.300 1.700s3.100-.6 4.300-1.700l3.300.3q3.600.3 3.600 3.900v6.500z"/></g><rect x="231.400" y="86.700" width="13.200" height="1.200" fill="#8a949c"/><path d="M235.300 79.500v5.500M240.700 79.500v5.500" stroke="#2a4256" stroke-width=".9" fill="none"/>
<g fill="#0e2233"><path d="M299.500 93.500l2.700-8.700l3.400-3.400h6.600v8.600l1.300-2.800h.9l.5 3h1.200q.8 0 .8.800v8.500h-14.600z"/><path d="M293.500 81.400a1.600 1.600 0 0 1 1.800 1.400l6.500 11.800l-2 1.500l-6.400-10.400l-4.600 6.200l-1.500-1.100l5.100-8.200a1.600 1.600 0 0 1 1.100-1.200z"/><path d="M287.700 91.700l4.200.5l4.400 6.400h-8.800q-1.400-.2-1.200-1.600z"/><rect x="297.500" y="96.800" width="19.800" height="6.400" rx="3.200"/></g><path d="M303.300 86l2.600-3.200h4.600l-1.500 7.400l-2 1.400h-4.500z" fill="#fff"/><circle cx="293.700" cy="83" r=".7" fill="#fff"/><rect x="298.800" y="98.100" width="17.200" height="3.800" rx="1.900" fill="#fff"/><g fill="#0e2233"><circle cx="301.400" cy="100" r="1.500"/><circle cx="305.200" cy="100" r="1.500"/><circle cx="309" cy="100" r="1.500"/><circle cx="312.800" cy="100" r="1.500"/></g>
<g fill="#0e2233"><path d="M355.200 80q0-3 3-3h18.300v28.800h-18.300q-3 0-3-3z"/><path d="M378 81h1.800v24.800h-4v-1.800h2.200z"/></g><path d="M378.300 99.700H359.600a1.750 1.750 0 0 0 0 3.500H378.300" fill="none" stroke="#fff" stroke-width="1.100"/>
<rect x="410.200" y="76.800" width="24.600" height="29.200" rx="2.200" fill="#0e2233"/><g fill="#fff"><rect x="415" y="81.800" width="15" height="1.500"/><rect x="415" y="87.800" width="15" height="1.500"/><rect x="415" y="94" width="15" height="1.500"/><circle cx="429.600" cy="101" r="3.800"/></g><path d="M427.600 101.300l1.400 1.400l2.800-3.200" fill="none" stroke="#0e2233" stroke-width="1.100"/>
<rect x="461" y="75.300" width="27" height="31.700" fill="#e6e6e6"/><rect x="462.500" y="77" width="24" height="29" rx="1.500" fill="#707070"/><g fill="#d4d4d4"><rect x="467" y="82" width="15" height="1.400"/><rect x="467" y="88" width="15" height="1.400"/><rect x="467" y="94.200" width="14" height="1.400"/></g><text x="479.600" y="104.800" font-family="Liberation Sans" font-size="10.500" fill="#e2e2e2">$</text>
<path d="M540.60 94.94 L537.16 98.53 L530.82 91.90 L537.16 85.27 L549.84 98.53 L556.18 91.90 L549.84 85.27 L546.40 88.86" fill="none" stroke="#f0c300" stroke-width="4.80" stroke-linejoin="miter" stroke-miterlimit="10"/>
<path d="M607.86 93.80 L604.58 97.17 L598.36 90.80 L604.58 84.43 L617.02 97.17 L623.24 90.80 L617.02 84.43 L613.74 87.80" fill="none" stroke="#ff7f0e" stroke-width="4.80" stroke-linejoin="miter" stroke-miterlimit="10"/>
<path d="M659.86 93.80 L656.58 97.17 L650.36 90.80 L656.58 84.43 L669.02 97.17 L675.24 90.80 L669.02 84.43 L665.74 87.80" fill="none" stroke="#0b5fa8" stroke-width="4.80" stroke-linejoin="miter" stroke-miterlimit="10"/>
<path d="M705.05 93.79 L701.69 97.19 L695.37 90.80 L701.69 84.41 L714.31 97.19 L720.63 90.80 L714.31 84.41 L710.95 87.81" fill="none" stroke="#0a9c5c" stroke-width="4.80" stroke-linejoin="miter" stroke-miterlimit="10"/>
<path d="M607.600 129.200h4.800l-2.400 2.400z" fill="#000"/>
<path d="M123.800 155.300l7.400 7.400m0-7.400l-7.400 7.400" stroke="#6a6a6a" stroke-width="1.900" fill="none"/>
<path d="M320.300 155.300l7.400 7.400m0-7.400l-7.400 7.400" stroke="#fff" stroke-width="2" fill="none"/>
<path d="M55.900 203h6.300v9.900h9.800v6.300h-9.800v9.800h-6.300v-9.800h-9.800v-6.300h9.800z" fill="#0e2233"/>
<g fill="#0e2233"><rect x="92.400" y="200" width="23.500" height="1.800"/><path d="M104.400 204.800l12.400 10.500h-5.100v13.700h-14.100v-13.700h-5.400z"/></g><rect x="97.600" y="229" width="14.100" height="2.400" fill="#6e6e6e"/><rect x="100" y="221.600" width="9.500" height="2.600" fill="#fff"/>
<g fill="#0e2233"><path d="M141.800 200h13.400v17h5.300l-12 9.600l-11.900-9.600h5.200z"/><rect x="137.500" y="230.100" width="22.500" height="1.900"/></g><rect x="143.600" y="207.600" width="9.500" height="2.500" fill="#fff"/>
<g fill="#0e2233"><path d="M188 200h13v15.500h5l-12.100 9.800l-11.900-9.800h6z"/><path d="M182.600 218.200l11.300 9.300l11.500-9.300l.8.900l-12.300 10.300l-12.100-10.300z"/><rect x="183.300" y="230.300" width="21.600" height="1.700"/><rect x="186" y="203" width=".9" height="12.500"/><rect x="184.300" y="205" width=".8" height="10.500" opacity=".7"/></g>
<rect x="224.400" y="211.200" width="29.600" height="10.700" rx="5.350" fill="#1b3040"/><circle cx="247.900" cy="216.550" r="3.600" fill="#fff"/>
<g fill="#0e2233"><path d="M284.600 200h15.300v17h5.200l-13.100 10.200l-13.100-10.200h5.700z"/><rect x="279.500" y="230.100" width="24.400" height="1.900"/></g><path d="M291 204.400h2v3.400h3.400v2h-3.400v3.400h-2v-3.400h-3.400v-2h3.400z" fill="#fff"/>
<g fill="none" stroke="#0e2233" stroke-width="1.900" stroke-linejoin="round"><path d="M329.300 206.500h12.200l7.500 7.500v15.800h-19.700z" fill="#fff"/><path d="M341.300 206.700v7.500h7.500"/><path d="M339.500 202.400h-12.500q-2 0-2 2v20.500q0 1.800 1.800 2" stroke-width="1.700"/></g>
<g fill="#0e2233"><path d="M374.300 201.300c1.500-.4 3 .2 3.600 1.700l10.300 19.500l-3.300 1.900l-9.500-14.700c-1.700-2.700-2.300-5.700-1.100-8.400z"/><path d="M389.700 201.300c-1.500-.4-3 .2-3.600 1.700l-10.300 19.500l3.300 1.900l9.500-14.700c1.700-2.700 2.300-5.700 1.100-8.400z"/></g><g fill="none" stroke="#0e2233" stroke-width="2.700"><ellipse cx="374.400" cy="225.800" rx="3" ry="5" transform="rotate(32 374.400 225.800)"/><ellipse cx="389.600" cy="225.800" rx="3" ry="5" transform="rotate(-32 389.600 225.800)"/></g><circle cx="382" cy="216.500" r=".9" fill="#fff"/>
<g fill="none" stroke="#0e2233" stroke-width="1.100"><path d="M423 205.300h-4.400v17.800h6.200M430 205.300h4.400v5"/><path d="M422.500 206.800v-2.400h2.200q.3-2.200 1.800-2.200t1.800 2.200h2.200v2.400z"/><path d="M425.400 210.900h13.300v17.500h-13.300z" fill="#fff"/><path d="M425.400 214.700h3.600v-3.800" /></g>
<g fill="none" stroke="#1c1c1c" stroke-width="3.100"><path d="M469.800 202.500h20.300" stroke-width="2.900"/><path d="M479.900 207.500v21.400M472.200 216l7.700-8.300l7.700 8.300"/><path d="M525 206.700v22.200M517.300 216l7.700-8.800l7.700 8.800"/><path d="M570 204.800v22.200M562.200 217.800l7.800 8.800l7.800-8.800"/><path d="M614.900 202.300v21.500M607.100 215.500l7.800 8.600l7.800-8.600"/><path d="M605.100 228.800h19.900" stroke-width="3"/></g>
<rect x="818.700" y="205.300" width="24.400" height="21" rx="1" fill="#fff" stroke="#0e2233" stroke-width="1.700"/><path d="M821 224.500v-5l6-8.500l5.500 8l5.200-4.800l2.800 3.800v6.500z" fill="#0e2233"/><circle cx="836.600" cy="210.500" r="2.300" fill="#0e2233"/>
<g stroke="#0e2233" fill="none"><circle cx="881" cy="212.800" r="8" stroke-width="3.300"/><path d="M887.4 219.400l7.800 7.900" stroke-width="4" stroke-linecap="round"/><path d="M876.5 212.800h9" stroke-width="2.300"/><path d="M881 208.300v9" stroke-width="2.300"/></g>
<g stroke="#0e2233" fill="none"><circle cx="925.9" cy="212.800" r="8" stroke-width="3.300"/><path d="M932.3 219.400l7.800 7.900" stroke-width="4" stroke-linecap="round"/><path d="M921.4 212.800h9" stroke-width="2.300"/></g>
<g fill="#0e2233"><path d="M961.2 203.1L970.8000000000001 203.1L967.5 206.4L972.2 211.1L969.2 214.1L964.5 209.4L961.2 212.7z"/><path d="M987.1 203.1L977.5 203.1L980.8000000000001 206.4L976.1 211.1L979.1 214.1L983.8000000000001 209.4L987.1 212.7z"/><path d="M961.2 228.9L970.8000000000001 228.9L967.5 225.6L972.2 220.9L969.2 217.9L964.5 222.6L961.2 219.3z"/><path d="M987.1 228.9L977.5 228.9L980.8000000000001 225.6L976.1 220.9L979.1 217.9L983.8000000000001 222.6L987.1 219.3z"/></g>
<g fill="none" stroke="#0e2233" stroke-width="2.700"><path d="M1016 213.500a11.200 11.200 0 0 1 19.500-5.800"/><path d="M1038.200 218.500a11.200 11.200 0 0 1-19.500 5.800"/></g><g fill="#0e2233"><path d="M1040.300 203.800v9.400h-9.400z"/><path d="M1013.900 228.200v-9.400h9.400z"/></g>
<g fill="#0e2233"><rect x="1056" y="201.100" width="15" height="14.500" rx="1.800"/><rect x="1073.200" y="201.100" width="15" height="14.500" rx="1.800"/><rect x="1056" y="217.500" width="15" height="14.500" rx="1.800"/><rect x="1073.200" y="217.500" width="15" height="14.500" rx="1.800"/></g><g stroke="#fff" stroke-width="1.700" fill="none"><path d="M1058.800 208.400h9.400"/><path d="M1076 206h9.400M1076 210.800h9.400"/><path d="M1058.800 224.800h9.400M1063.500 220.100v9.400"/><path d="M1077.400 221.500l6.600 6.600m0-6.600l-6.600 6.600"/></g>
<defs><radialGradient id="gd" cx=".38" cy=".32" r=".75"><stop offset="0" stop-color="#7fe0a2"/><stop offset=".55" stop-color="#3fb871"/><stop offset="1" stop-color="#2c9a58"/></radialGradient></defs><circle cx="1108.900" cy="212.900" r="5.800" fill="url(#gd)" stroke="#9a9a9a" stroke-width=".7"/><path d="M1121.400 212.300h4.600l-2.300 2.500z" fill="#000"/>
<path d="M1142.200 217.200l4.400-4.300l7.600 7.300l15.400-16.200l4.400 4.300l-19.800 20.600z" fill="#0e2233"/>
<g fill="none" stroke="#0e2233" stroke-width="2.900"><path d="M1211.300 209.600c-.3-3.300-2.800-5.600-6.700-5.600c-4 0-6.800 2.300-6.800 5.700c0 3.200 2.200 4.600 6.800 5.900c5.300 1.500 7.500 3 7.500 6.600c0 3.600-3 6-7.400 6c-4.500 0-7.300-2.400-7.600-6.200"/><path d="M1204.600 200v32" stroke-width="2"/></g>
<g fill="none" stroke="#0e2233" stroke-width="1.200" stroke-linejoin="round"><path d="M1249.200 203.700h10.300l6 6v17.400q0 1.500-1.500 1.500h-14.300q-1.500 0-1.500-1.500v-21.900q0-1.500 1-1.500z"/><path d="M1259.500 203.900v6h6"/></g><g fill="#3a4a58"><rect x="1250.500" y="216.400" width="13" height="1.200"/><rect x="1250.500" y="219.900" width="13" height="1.200"/><rect x="1250.500" y="223.400" width="13" height="1.200"/></g>
<g fill="none" stroke="#0e2233" stroke-width="2.100" stroke-linejoin="round"><path d="M1289.300 201.300h17l7.600 7.700v20.500q0 1.100-1.100 1.100h-23.500q-1.100 0-1.100-1.100v-27.100q0-1.100 1.100-1.100z"/><path d="M1306.300 201.500v7.700h7.500" stroke-width="1.600"/></g><path d="M1293 212h5.200l2.800 4.600l2.800-4.600h5l-5.100 7.700l5.500 8.300h-5.300l-3.100-5l-3.100 5h-5.100l5.600-8.300z" fill="#0e2233"/>
<g fill="#0e2233"><rect x="1338" y="201.900" width="16.100" height="3.900"/><rect x="1330.100" y="207.600" width="31.700" height="14.400" rx="2"/><rect x="1338" y="217" width="16.600" height="12.800"/></g><rect x="1340" y="218.300" width="12.600" height="9.500" fill="#fff"/><circle cx="1334.400" cy="212" r="1.500" fill="#fff"/>
<path d="M1386 212h5.200l-2.600 2.900z" fill="#000"/><path d="M1480 212h5.200l-2.600 2.900z" fill="#000"/>
<path d="M1437.42 218.71 L1433.81 222.35 L1427.43 215.90 L1433.81 209.45 L1446.59 222.35 L1452.97 215.90 L1446.59 209.45 L1442.98 213.09" fill="none" stroke="#ff7f0e" stroke-width="4.30" stroke-linejoin="miter" stroke-miterlimit="10"/>
<path d="M849.66 275.50L846.14 275.50L846.14 273.42L844.09 272.24L842.29 273.27L840.53 270.23L842.32 269.19L842.32 266.81L840.53 265.77L842.29 262.73L844.09 263.76L846.14 262.58L846.14 260.50L849.66 260.50L849.66 262.58L851.71 263.76L853.51 262.73L855.27 265.77L853.48 266.81L853.48 269.19L855.27 270.23L853.51 273.27L851.71 272.24L849.66 273.42zM851.0 268a3.1 3.1 0 1 0 -6.2 0a3.1 3.1 0 1 0 6.2 0z" fill="#0e2233" fill-rule="evenodd" stroke="#0e2233" stroke-width=".8" stroke-linejoin="round"/>
<g transform="translate(52.900 311.700) rotate(-43.500)"><path d="M0 0l6.500-3.800h17.500v7.600h-17.500z" fill="#0e2233"/><path d="M25.200-3.800h2.200a3.800 3.800 0 0 1 0 7.600h-2.200z" fill="#0e2233"/><rect x="8" y="-.7" width="14.500" height="1.400" fill="#fff"/></g>
<path d="M85.600 291.200h14.400l2.600 2.600v14.600h-17z" fill="#fff" stroke="#707070" stroke-width="2.200" stroke-linejoin="miter"/><rect x="88" y="291" width="11" height="7.600" fill="#707070"/><rect x="94" y="293" width="2.400" height="4.400" fill="#fff"/>
<path d="M112.400 297.500l7.300-7.200v4.500c6.500 0 9.300 3.700 9.300 8.200c0 2.700-1.300 5-3.400 6.800c.9-2.100 1.100-3.700.3-5.400c-1-2-3-2.700-6.200-2.700v3.100z" fill="#707070"/>
<path d="M665.300 295.800c0-2 4.200-3.300 9.400-3.300s9.400 1.300 9.400 3.300c0 .8-.5 1.400-1.400 2l-5.200 5.500v7.400h-5.200v-7.400l-5.500-5.500c-1-.6-1.500-1.200-1.500-2z" fill="#111"/><ellipse cx="674.700" cy="295.500" rx="8" ry="1.900" fill="#fff"/><path d="M673 299.300l3.400 3.400m0-3.400l-3.400 3.400" stroke="#fff" stroke-width="1" fill="none"/>
<g fill="none" stroke="#0e2233" stroke-width="1.800"><path d="M699.700 300.800a6.800 6.800 0 0 1 11.800-3.600"/><path d="M713 303.600a6.800 6.800 0 0 1-11.800 3.600"/></g><g fill="#0e2233"><path d="M714.300 294.300v6.200h-6.200z"/><path d="M698.400 310.100v-6.200h6.200z"/></g></svg>
<svg style="left:0;top:0" width="1805" height="859" viewBox="0 0 1805 859"><g stroke="#000" stroke-width="1" fill="none" shape-rendering="crispEdges"><path d="M38.500 353v139.500h9"/><path d="M38.500 366.500h12.500M38.500 384.500h9M38.500 402.500h12.500M38.500 420.500h9M38.500 438.500h12.500M38.500 456.500h9M38.500 474.500h12.500"/></g>
<defs><linearGradient id="bx" x1="0" y1="0" x2="0" y2="1"><stop offset="0" stop-color="#fff"/><stop offset="1" stop-color="#dcdcdc"/></linearGradient><linearGradient id="cbx" x1="0" y1="0" x2="1" y2="1"><stop offset="0" stop-color="#d4d7de"/><stop offset="1" stop-color="#f6f6f6"/></linearGradient></defs>
<rect x="34.5" y="344.5" width="8" height="8" rx="1.300" fill="url(#bx)" stroke="#9a9a9a"/>
<path d="M36.3 348.5h4.400" stroke="#3555a8" stroke-width="1.100" fill="none"/>
<rect x="47.5" y="380.5" width="8" height="8" rx="1.300" fill="url(#bx)" stroke="#9a9a9a"/>
<path d="M49.3 384.5h4.400M51.5 382.3v4.400" stroke="#3555a8" stroke-width="1.100" fill="none"/>
<rect x="47.5" y="416.5" width="8" height="8" rx="1.300" fill="url(#bx)" stroke="#9a9a9a"/>
<path d="M49.3 420.5h4.400M51.5 418.3v4.400" stroke="#3555a8" stroke-width="1.100" fill="none"/>
<rect x="47.5" y="452.5" width="8" height="8" rx="1.300" fill="url(#bx)" stroke="#9a9a9a"/>
<path d="M49.3 456.5h4.400M51.5 454.3v4.400" stroke="#3555a8" stroke-width="1.100" fill="none"/>
<rect x="47.5" y="488.5" width="8" height="8" rx="1.300" fill="url(#bx)" stroke="#9a9a9a"/>
<path d="M49.3 492.5h4.400M51.5 490.3v4.400" stroke="#3555a8" stroke-width="1.100" fill="none"/>
<rect x="102.5" y="342.5" width="12" height="12" fill="#fff" stroke="#8e8f8f"/>
<rect x="104" y="344" width="9" height="9" fill="url(#cbx)"/>
<path d="M105.3 348.3l2.500 3.200l4.200-7" fill="none" stroke="#3a4fa4" stroke-width="1.700"/>
<rect x="168.5" y="378.5" width="12" height="12" fill="#fff" stroke="#8e8f8f"/>
<rect x="170" y="380" width="9" height="9" fill="url(#cbx)"/>
<path d="M171.3 384.3l2.500 3.200l4.200-7" fill="none" stroke="#3a4fa4" stroke-width="1.700"/>
<rect x="168.5" y="486.5" width="12" height="12" fill="#fff" stroke="#8e8f8f"/>
<rect x="170" y="488" width="9" height="9" fill="url(#cbx)"/>
<path d="M171.3 492.3l2.500 3.200l4.200-7" fill="none" stroke="#3a4fa4" stroke-width="1.700"/>
<g fill="#000"><path d="M349 392.800v-8.500c0-4.500 2.800-7.600 6.600-7.600c2.200 0 3.600.8 4.700 1.900c1.300.2 3.200 1.600 3.700 3.800l-1.400 1.200v9.200z"/><rect x="363" y="391.400" width="3.500" height="1.400"/></g><ellipse cx="355.300" cy="386" rx="4.100" ry="5.500" fill="#c9cbd9"/><path d="M353.300 383h4l-2.400 6.400" fill="none" stroke="#000" stroke-width="1.300"/>
<path d="M1095.200 377.6h7.500v8.400h2.700l-6.400 5.300l-6.400-5.300h2.600z" fill="#0e2233"/><path d="M1098.400 379.6h1.300v1.700h1.700v1.300h-1.700v1.700h-1.300v-1.700h-1.700v-1.300h1.700z" fill="#fff"/>
<path d="M1095.200 413.5h7.500v8.400h2.700l-6.400 5.300l-6.400-5.300h2.600z" fill="#0e2233"/><path d="M1098.400 415.5h1.300v1.700h1.700v1.300h-1.700v1.700h-1.300v-1.700h-1.700v-1.300h1.700z" fill="#fff"/>
<path d="M1095.200 449.6h7.500v8.400h2.700l-6.400 5.300l-6.400-5.300h2.600z" fill="#0e2233"/><path d="M1098.400 451.6h1.300v1.700h1.700v1.300h-1.700v1.700h-1.300v-1.700h-1.700v-1.300h1.700z" fill="#fff"/>
<path d="M1095.200 485.6h7.500v8.400h2.700l-6.400 5.300l-6.400-5.300h2.600z" fill="#0e2233"/><path d="M1098.400 487.6h1.300v1.700h1.700v1.300h-1.700v1.700h-1.300v-1.700h-1.700v-1.300h1.700z" fill="#fff"/></svg>
<span class="t" style="left:58.50px;top:11px;font-size:29px;line-height:29px;color:#fff;font-weight:bold;letter-spacing:2.348px;-webkit-text-stroke:1.3px #fff;">ESTIMATION</span>
<span class="t" style="left:10px;top:179px;font-size:11.5px;line-height:14px;color:#222;writing-mode:vertical-rl;">Catalog items</span>
<div style="left:189px;top:411px;width:51px;height:19px;background:#c9cbd9;box-sizing:border-box;border:1px solid #9a9a9a;border-top:2px solid #6c6c6c;border-left:1.5px solid #7a7a7a;border-bottom:1px solid #e8e8e8;border-right:1px solid #e8e8e8;"></div>
<div style="left:221px;top:413px;width:17px;height:15.5px;background:#f2f2f2;box-sizing:border-box;border:1px solid #fff;border-right:1.5px solid #555;border-bottom:1.5px solid #555;"></div>
<svg style="left:225px;top:418.5px;" width="9" height="5" viewBox="0 0 9 5"><path d="M0 0h9L4.500 5z" fill="#000"/></svg>
<div style="left:189px;top:431px;width:51px;height:61.5px;background:#c9cbd9;box-sizing:border-box;border:1px solid #7c7c7c;"></div>
<span class="t" style="left:193.60px;top:437px;font-size:11px;line-height:11px;color:#000;">No</span>
<span class="t" style="left:193.40px;top:457px;font-size:11px;line-height:11px;color:#000;letter-spacing:-0.150px;">Standard</span>
<span class="t" style="left:193.40px;top:476px;font-size:11px;line-height:11px;color:#000;letter-spacing:-0.513px;">Special</span>
<svg style="left:0;top:0" width="1805" height="859" viewBox="0 0 1805 859"><defs><filter id="sh" x="-20%" y="-20%" width="150%" height="150%"><feGaussianBlur in="SourceAlpha" stdDeviation="1.600"/><feOffset dx="2" dy="2.500" result="o"/><feComponentTransfer><feFuncA type="linear" slope=".55"/></feComponentTransfer><feMerge><feMergeNode/><feMergeNode in="SourceGraphic"/></feMerge></filter><radialGradient id="rc" cx=".5" cy=".4" r=".7"><stop offset="0" stop-color="#9a1010"/><stop offset="1" stop-color="#7a0808"/></radialGradient></defs>
<g filter="url(#sh)" fill="none" stroke="#8b0505" stroke-width="3"><ellipse cx="545.100" cy="269.800" rx="57.200" ry="20.500"/><ellipse cx="217" cy="329.200" rx="32" ry="13.300"/><ellipse cx="225.700" cy="462.500" rx="52.600" ry="60.800"/></g>
<g filter="url(#sh)"><path d="M322 364L240 416" stroke="#8b0505" stroke-width="1.700" fill="none"/><path d="M233.500 420l9-1.200l-4.600-7.300z" fill="#8b0505"/><path d="M329.500 367L243 451" stroke="#8b0505" stroke-width="1.700" fill="none"/><path d="M236.700 457.500l8.800-2.700l-5.900-6.100z" fill="#8b0505"/></g><circle cx="330.600" cy="354.500" r="14.550" fill="#8b0000"/><path d="M331.400 348V360H328.900V351.300L326.800 352.400V350.300L329.700 348Z" fill="#fff"/></svg>
</div></body></html>
